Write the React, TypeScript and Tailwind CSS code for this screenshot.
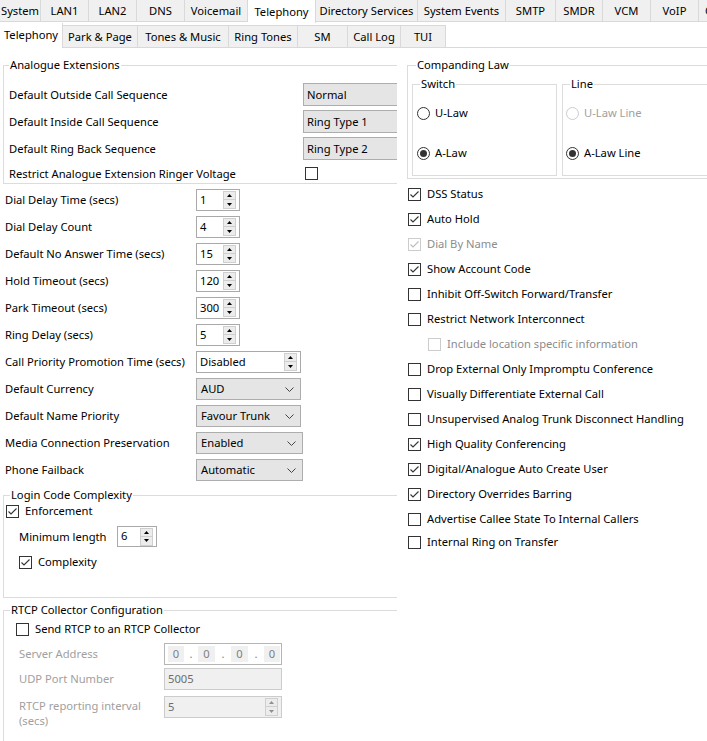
import React from "react";

function Check({ checked = false, disabled = false }: { checked?: boolean; disabled?: boolean }) {
  return (
    <span
      className={`flex h-[13px] w-[13px] shrink-0 items-center justify-center border bg-white ${
        disabled ? "border-[#cccccc]" : "border-[#333333]"
      }`}
    >
      {checked && (
        <svg width="11" height="11" viewBox="0 0 11 11">
          <path d="M1.5 5.5 L4 8 L9.5 2.5" fill="none" stroke={disabled ? "#bdbdbd" : "#333333"} strokeWidth="1.1" />
        </svg>
      )}
    </span>
  );
}

function Radio({ checked = false, disabled = false }: { checked?: boolean; disabled?: boolean }) {
  return (
    <span
      className={`flex h-[13px] w-[13px] shrink-0 items-center justify-center rounded-full border bg-white ${
        disabled ? "border-[#cccccc]" : "border-[#333333]"
      }`}
    >
      {checked && <span className="h-[7px] w-[7px] rounded-full bg-[#333333]" />}
    </span>
  );
}

function SpinBtns({ disabled = false }: { disabled?: boolean }) {
  const c = disabled ? "#909090" : "#000000";
  return (
    <div className="flex flex-col">
      <div className="flex h-[9px] w-[13px] items-center justify-center border border-[#cfcfcf] bg-[#ececec]">
        <svg width="5" height="3" viewBox="0 0 5 3">
          <path d="M0 3 L2.5 0 L5 3Z" fill={c} />
        </svg>
      </div>
      <div className="flex h-[9px] w-[13px] items-center justify-center border border-t-0 border-[#cfcfcf] bg-[#ececec]">
        <svg width="5" height="3" viewBox="0 0 5 3">
          <path d="M0 0 L2.5 3 L5 0Z" fill={c} />
        </svg>
      </div>
    </div>
  );
}

function Spin({ value, w, h = "h-[22px]", disabled = false }: { value: string; w: string; h?: string; disabled?: boolean }) {
  return (
    <div
      className={`flex ${w} ${h} shrink-0 items-center justify-between border pl-[3px] pr-[3px] ${
        disabled ? "border-[#cccccc] bg-[#f0f0f0] text-[#6d6d6d]" : "border-[#a9a9a9] bg-white"
      }`}
    >
      <span className="-mt-[1px]">{value}</span>
      <SpinBtns disabled={disabled} />
    </div>
  );
}

function Chevron() {
  return (
    <svg width="9" height="5" viewBox="0 0 9 5">
      <path d="M0.5 0.5 L4.5 4.5 L8.5 0.5" fill="none" stroke="#444444" strokeWidth="1" />
    </svg>
  );
}

function Drop({ value, w }: { value: string; w: string }) {
  return (
    <div className={`flex ${w} h-[22px] shrink-0 items-center justify-between border border-[#adadad] bg-[#e5e5e5] pl-[4px] pr-[6px]`}>
      <span>{value}</span>
      <Chevron />
    </div>
  );
}

const row1: { t: string; w: string; sel?: boolean }[] = [
  { t: "System", w: "w-[41px]" },
  { t: "LAN1", w: "w-[48px]" },
  { t: "LAN2", w: "w-[48px]" },
  { t: "DNS", w: "w-[48px]" },
  { t: "Voicemail", w: "w-[63px]" },
  { t: "Telephony", w: "w-[68px]", sel: true },
  { t: "Directory Services", w: "w-[102px]" },
  { t: "System Events", w: "w-[88px]" },
  { t: "SMTP", w: "w-[50px]" },
  { t: "SMDR", w: "w-[47px]" },
  { t: "VCM", w: "w-[48px]" },
  { t: "VoIP", w: "w-[48px]" },
];

const row2: { t: string; w: string; sel?: boolean }[] = [
  { t: "Telephony", w: "w-[63px]", sel: true },
  { t: "Park & Page", w: "w-[75px]" },
  { t: "Tones & Music", w: "w-[91px]" },
  { t: "Ring Tones", w: "w-[69px]" },
  { t: "SM", w: "w-[50px]" },
  { t: "Call Log", w: "w-[53px]" },
  { t: "TUI", w: "w-[45px]" },
];

function Group({
  title,
  titleLeft,
  className,
  children,
}: {
  title: string;
  titleLeft: string;
  className: string;
  children: React.ReactNode;
}) {
  return (
    <div className={`relative border border-[#dcdcdc] ${className}`}>
      <span className={`absolute -top-[9px] ${titleLeft} bg-white px-[1px] leading-[16px]`}>{title}</span>
      {children}
    </div>
  );
}

const spinRows: { label: string; ctrl: React.ReactNode }[] = [
  { label: "Dial Delay Time (secs)", ctrl: <Spin value="1" w="w-[44px]" /> },
  { label: "Dial Delay Count", ctrl: <Spin value="4" w="w-[44px]" /> },
  { label: "Default No Answer Time (secs)", ctrl: <Spin value="15" w="w-[44px]" /> },
  { label: "Hold Timeout (secs)", ctrl: <Spin value="120" w="w-[44px]" /> },
  { label: "Park Timeout (secs)", ctrl: <Spin value="300" w="w-[44px]" /> },
  { label: "Ring Delay (secs)", ctrl: <Spin value="5" w="w-[44px]" /> },
  { label: "Call Priority Promotion Time (secs)", ctrl: <Spin value="Disabled" w="w-[105px]" /> },
  { label: "Default Currency", ctrl: <Drop value="AUD" w="w-[105px]" /> },
  { label: "Default Name Priority", ctrl: <Drop value="Favour Trunk" w="w-[105px]" /> },
  { label: "Media Connection Preservation", ctrl: <Drop value="Enabled" w="w-[107px]" /> },
  { label: "Phone Failback", ctrl: <Drop value="Automatic" w="w-[107px]" /> },
];

const checks: { label: string; checked?: boolean; disabled?: boolean; indent?: boolean; extra?: string }[] = [
  { label: "DSS Status", checked: true },
  { label: "Auto Hold", checked: true },
  { label: "Dial By Name", checked: true, disabled: true },
  { label: "Show Account Code", checked: true },
  { label: "Inhibit Off-Switch Forward/Transfer" },
  { label: "Restrict Network Interconnect" },
  { label: "Include location specific information", disabled: true, indent: true },
  { label: "Drop External Only Impromptu Conference" },
  { label: "Visually Differentiate External Call" },
  { label: "Unsupervised Analog Trunk Disconnect Handling" },
  { label: "High Quality Conferencing", checked: true },
  { label: "Digital/Analogue Auto Create User", checked: true },
  { label: "Directory Overrides Barring", checked: true },
  { label: "Advertise Callee State To Internal Callers" },
  { label: "Internal Ring on Transfer", extra: "-mt-[2px]" },
];

export default function App() {
  return (
    <div className="h-[741px] w-[707px] overflow-hidden bg-white font-['Noto_Sans',sans-serif] text-[11.2px] leading-[16px] text-black">
      {/* Tab row 1 */}
      <div className="flex h-[23px] items-start overflow-hidden whitespace-nowrap">
        {row1.map((t) => (
          <div
            key={t.t}
            className={`flex shrink-0 items-center justify-center pt-[1px] ${t.w} ${
              t.sel
                ? "h-[23px] border-r border-[#d9d9d9] bg-white"
                : "h-[22px] border-r border-b border-[#d9d9d9] bg-[#f0f0f0]"
            }`}
          >
            {t.t}
          </div>
        ))}
        <div className="flex h-[22px] w-[60px] shrink-0 items-center border-b border-[#d9d9d9] bg-[#f0f0f0] pl-[6px] pt-[1px]">
          C
        </div>
      </div>
      {/* Tab row 2 */}
      <div className="flex h-[25px] items-end whitespace-nowrap">
        {row2.map((t) => (
          <div
            key={t.t}
            className={`flex shrink-0 items-center justify-center ${t.w} ${
              t.sel
                ? "h-[25px] border-r border-[#d9d9d9] bg-white pb-[1px]"
                : "h-[23px] border-r border-t border-b border-[#d9d9d9] bg-[#f0f0f0]"
            }`}
          >
            {t.t}
          </div>
        ))}
        <div className="h-[1px] flex-1 bg-[#d9d9d9]" />
      </div>

      {/* Content */}
      <div className="flex">
        {/* Left column */}
        <div className="w-[397px] shrink-0 overflow-hidden">
          <Group title="Analogue Extensions" titleLeft="left-[5px]" className="ml-[3px] mt-[17px] w-[420px] border-r-0">
            <div className="flex flex-col pl-[5px] pt-[17px]">
              {[
                ["Default Outside Call Sequence", "Normal"],
                ["Default Inside Call Sequence", "Ring Type 1"],
                ["Default Ring Back Sequence", "Ring Type 2"],
              ].map(([l, v]) => (
                <div key={l} className="flex h-[27px] items-start">
                  <div className="flex h-[23px] w-[294px] shrink-0 items-center">{l}</div>
                  <div className="flex h-[23px] w-[110px] shrink-0 items-center border border-[#adadad] bg-[#e5e5e5] pl-[3px]">
                    {v}
                  </div>
                </div>
              ))}
              <div className="flex h-[19px] items-center">
                <div className="w-[296px] shrink-0">Restrict Analogue Extension Ringer Voltage</div>
                <Check />
              </div>
            </div>
          </Group>

          <div className="mt-[5px] flex flex-col pl-[5px]">
            {spinRows.map((r) => (
              <div key={r.label} className="flex h-[27px] items-start">
                <div className="flex h-[22px] w-[191px] shrink-0 items-center whitespace-nowrap">{r.label}</div>
                {r.ctrl}
              </div>
            ))}
          </div>

          <Group title="Login Code Complexity" titleLeft="left-[6px]" className="ml-[3px] mt-[9px] w-[420px] border-r-0">
            <div className="flex flex-col pb-[27px] pt-[7px]">
              <div className="flex h-[16px] items-center gap-[6px] pl-[2px]">
                <Check checked />
                <span>Enforcement</span>
              </div>
              <div className="mt-[7px] flex h-[21px] items-center pl-[15px]">
                <span className="w-[98px] shrink-0">Minimum length</span>
                <Spin value="6" w="w-[40px]" h="h-[21px]" />
              </div>
              <div className="mt-[7px] flex h-[16px] items-center gap-[6px] pl-[15px]">
                <Check checked />
                <span>Complexity</span>
              </div>
            </div>
          </Group>

          <Group title="RTCP Collector Configuration" titleLeft="left-[6px]" className="ml-[3px] mt-[12px] h-[200px] w-[420px] border-r-0">
            <div className="flex flex-col pt-[10px]">
              <div className="flex h-[16px] items-center gap-[6px] pl-[12px]">
                <Check />
                <span>Send RTCP to an RTCP Collector</span>
              </div>
              <div className="mt-[6px] flex h-[22px] items-center pl-[15px] text-[#a0a0a0]">
                <span className="w-[145px] shrink-0">Server Address</span>
                <div className="flex h-[22px] w-[118px] items-center border border-[#b5b5b5] bg-white pl-[3px] text-[#808080]">
                  <span className="flex h-[16px] w-[16px] items-center justify-center bg-[#f0f0f0]">0</span>
                  <span className="flex w-[14px] justify-center">.</span>
                  <span className="flex h-[16px] w-[17px] items-center justify-center bg-[#f0f0f0]">0</span>
                  <span className="flex w-[16px] justify-center">.</span>
                  <span className="flex h-[16px] w-[17px] items-center justify-center bg-[#f0f0f0]">0</span>
                  <span className="flex w-[16px] justify-center">.</span>
                  <span className="flex h-[16px] w-[16px] items-center justify-center bg-[#f0f0f0]">0</span>
                </div>
              </div>
              <div className="mt-[3px] flex h-[22px] items-center pl-[15px] text-[#a0a0a0]">
                <span className="w-[145px] shrink-0">UDP Port Number</span>
                <div className="flex h-[22px] w-[118px] items-center border border-[#cccccc] bg-[#f0f0f0] pl-[3px] text-[#6d6d6d]">
                  5005
                </div>
              </div>
              <div className="mt-[6px] flex items-start pl-[15px] text-[#a0a0a0]">
                <span className="mt-[2px] w-[145px] shrink-0 leading-[15px]">
                  RTCP reporting interval
                  <br />
                  (secs)
                </span>
                <Spin value="5" w="w-[118px]" disabled />
              </div>
            </div>
          </Group>
        </div>

        {/* Right column */}
        <div className="flex-1 pl-[10px]">
          <Group title="Companding Law" titleLeft="left-[8px]" className="mt-[17px] h-[114px] w-[320px] border-r-0">
            <div className="flex pl-[4px] pt-[18px]">
              <Group title="Switch" titleLeft="left-[7px]" className="h-[92px] w-[145px]">
                <div className="flex flex-col pl-[4px] pt-[20px]">
                  <div className="flex h-[16px] items-center gap-[5px]">
                    <Radio />
                    <span>U-Law</span>
                  </div>
                  <div className="mt-[24px] flex h-[16px] items-center gap-[5px]">
                    <Radio checked />
                    <span>A-Law</span>
                  </div>
                </div>
              </Group>
              <Group title="Line" titleLeft="left-[7px]" className="ml-[5px] h-[92px] w-[146px]">
                <div className="flex flex-col pl-[3px] pt-[20px]">
                  <div className="flex h-[16px] items-center gap-[5px] text-[#a0a0a0]">
                    <Radio disabled />
                    <span>U-Law Line</span>
                  </div>
                  <div className="mt-[24px] flex h-[16px] items-center gap-[5px]">
                    <Radio checked />
                    <span>A-Law Line</span>
                  </div>
                </div>
              </Group>
            </div>
          </Group>

          <div className="mt-[7px] flex flex-col gap-[9px] pl-[1px]">
            {checks.map((c) => (
              <div
                key={c.label}
                className={`flex h-[16px] items-center gap-[6px] whitespace-nowrap ${c.indent ? "pl-[20px]" : ""} ${
                  c.disabled ? "text-[#8c8c8c]" : ""
                } ${c.extra ?? ""}`}
              >
                <Check checked={c.checked} disabled={c.disabled} />
                <span>{c.label}</span>
              </div>
            ))}
          </div>
        </div>
      </div>
    </div>
  );
}
